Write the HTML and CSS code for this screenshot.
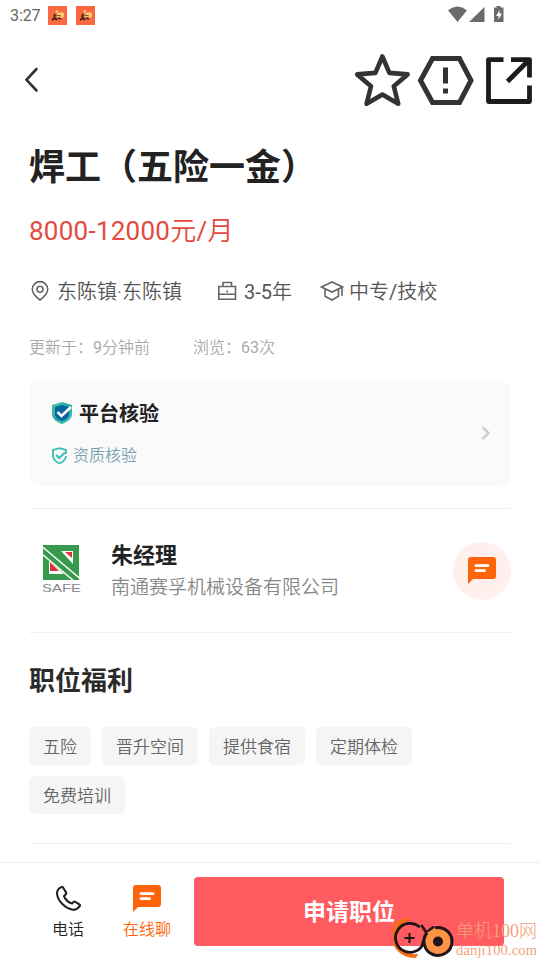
FILE: index.html
```html
<!DOCTYPE html>
<html lang="zh-CN">
<head>
<meta charset="utf-8">
<meta name="viewport" content="width=device-width, initial-scale=1">
<title>职位详情</title>
<link rel="stylesheet" href="styles.css">
</head>
<body>
<svg class="defs" aria-hidden="true">
  <symbol id="app" viewBox="0 0 19 19">
    <rect width="19" height="19" fill="#fa6840"/>
    <path d="M8 8l5-2 3 1v4l-4 1-3-1z" fill="#ffce73"/>
    <path d="M8 4.500l2 2" stroke="#ffce73" stroke-width="2"/>
    <path d="M4 14l3-2 2 2M7 8l-1 3M10 12l3 1" fill="none" stroke="#3b2218" stroke-width="1.800"/>
    <path d="M8 9l5 1" stroke="#8a3a18" stroke-width="1.200"/>
  </symbol>
  <symbol id="chat" viewBox="0 0 28 27">
    <path d="M3 0h22a3 3 0 0 1 3 3v16a3 3 0 0 1-3 3H5l-5 5V3a3 3 0 0 1 3-3z" fill="#ff6408"/>
    <path d="M8 8.700h12M8 13.700h8.500" stroke="#fff" stroke-width="2.800" stroke-linecap="round"/>
  </symbol>
</svg>

<div class="statusbar">
  <span class="clock">3:27</span>
  <svg class="app-icon" width="19" height="19"><use href="#app"/></svg>
  <svg class="app-icon" width="19" height="19"><use href="#app"/></svg>
  <svg class="signals" width="56" height="17" viewBox="0 0 56 17" fill="#6b6b6b">
    <path d="M0 4.200Q9.500-3.200 19 4.200L9.500 16z"/>
    <path d="M21 16L36.500 1v15z"/>
    <path d="M48.500 0h4v1.500h3V16H46V1.500h2.500z"/>
    <path d="M51.500 4l-3.500 6h2.500v3.500l3.500-6h-2.500z" fill="#fff"/>
  </svg>
</div>

<header class="topbar">
  <svg class="back" width="15" height="26" viewBox="0 0 15 26"><path d="M12.500 2L2.500 12.800l10 10.700" fill="none" stroke="#333" stroke-width="2.600" stroke-linecap="round"/></svg>
  <svg class="act-icon" width="178" height="56" viewBox="355 52 178 56" fill="none">
    <path d="M382.400 56.500l7 16.400 18.200 1.500-13.800 11.800 4.400 17.600-15.800-9.300-15.800 9.300 4.400-17.600-13.800-11.800 18.200-1.500z" stroke="#333" stroke-width="4.600" stroke-linejoin="round"/>
    <path d="M432.500 58.500h27l11.500 22-11.500 22h-27l-12-22z" stroke="#333" stroke-width="5"/>
    <path d="M445.500 67.500v16M445.500 88.500v5" stroke="#333" stroke-width="5"/>
    <path d="M503.500 59.700h-15v41.800h41V85.500M511 59.700h18.500V77.500M529 60L507.500 81.500" stroke="#1c1c1c" stroke-width="4.800" stroke-linejoin="round"/>
  </svg>
</header>

<main class="content">
  <h1 class="job-title">焊工（五险一金）</h1>
  <p class="salary"><span class="num">8000-12000</span>元<span class="num">/</span>月</p>
  <div class="meta">
    <span class="meta-item place"><svg width="22" height="22" viewBox="0 0 22 22"><path d="M11 20C7 17 3.300 13.500 3.300 9.300a7.700 7.700 0 0 1 15.400 0C18.700 13.500 15 17 11 20z"/><circle cx="11" cy="9.300" r="3"/></svg>东陈镇·东陈镇</span>
    <span class="meta-item years"><svg width="20" height="22" viewBox="0 0 20 22"><path d="M1.800 6.500h16.700v12.700H1.800zM6 6.500v-4h8.500v4M1.800 14.200h16.700M10.200 10.500v2"/></svg><span><span class="num">3-5</span>年</span></span>
    <span class="meta-item degree"><svg width="24" height="22" viewBox="0 0 24 22"><path d="M1.500 7L12 2l10.500 5L12 12zM5 9v7.200l7 3.800 6.500-3.800V9M22 8v8"/></svg><span>中专<span class="num">/</span>技校</span></span>
  </div>
  <div class="stats"><span>更新于：<span class="num">9</span>分钟前</span><span>浏览：<span class="num">63</span>次</span></div>

  <section class="verify">
    <div class="verify-text">
      <div class="verify-title">
        <svg width="22" height="24" viewBox="0 0 22 24">
          <defs><linearGradient id="teal" x1="0" y1="0" x2="1" y2="1"><stop offset="0" stop-color="#48c5b0"/><stop offset=".5" stop-color="#28a7a2"/><stop offset="1" stop-color="#42c9ad"/></linearGradient></defs>
          <path d="M11 1l10 3v9c0 5-5 8-10 10C6 21 1 18 1 13V4z" fill="url(#teal)"/>
          <path d="M11 4l7 2v7c0 4-4 6-7 7-3-1-7-3-7-7V6z" fill="#0864a0"/>
          <path d="M6.500 11l4 4L20 6" fill="none" stroke="#fff" stroke-width="2.600"/>
        </svg>平台核验
      </div>
      <div class="verify-sub">
        <svg width="17" height="18" viewBox="0 0 17 18" fill="none" stroke="#38bfb1" stroke-width="1.800"><path d="M15 7V3L8.500 1.200 2 3v6c0 4 3.500 6 6.500 7.500C11.500 15 15 13 15 9"/><path d="M5.200 8l3 3L14 5.500" stroke-width="2"/></svg>资质核验
      </div>
    </div>
    <svg width="10" height="16" viewBox="0 0 10 16"><path d="M1.500 2l6 6-6 6" fill="none" stroke="#ccc" stroke-width="2.400"/></svg>
  </section>

  <section class="recruiter">
    <svg class="avatar" width="64" height="64" viewBox="0 0 64 64">
      <circle cx="32" cy="32" r="31.500" fill="#fff" stroke="#fcfcfc"/>
      <path d="M14 6h36v35H14z" fill="#37994b"/>
      <path d="M32 12h12v13zM20 22v13h15z" fill="#fff"/>
      <path d="M36 13h7v6zM21 23v9h9z" fill="#df303d"/>
      <path d="M13 7.500l38 32M13 15l32 27" stroke="#fff" stroke-width="1.500"/>
      <text class="logo-text" x="13" y="53" textLength="39" lengthAdjust="spacingAndGlyphs">SAFE</text>
    </svg>
    <div class="recruiter-info"><h2>朱经理</h2><p>南通赛孚机械设备有限公司</p></div>
    <div class="chat-round"><svg width="28" height="27"><use href="#chat"/></svg></div>
  </section>

  <section class="benefits">
    <h2>职位福利</h2>
    <div class="tags"><span>五险</span><span>晋升空间</span><span>提供食宿</span><span>定期体检</span><span>免费培训</span></div>
  </section>
</main>

<footer class="bottombar">
  <div class="tab phone"><svg width="26" height="27" viewBox="0 0 26 27"><path d="M6.300 2.100C3.500 3.500 2 5.500 2 8.500 2.500 16 10.500 23.500 18 24.800c3 .4 5-1.300 6.700-3.600.5-.7.300-1.400-.4-1.900l-4-2.500c-.6-.4-1.300-.3-1.800.2L17 18.500C13.500 17.500 10.500 14.500 9 11.200l1.800-2c.5-.5.600-1.200.2-1.800L8 2.500c-.4-.6-1.100-.8-1.700-.4z" fill="none" stroke="#222" stroke-width="2.100" stroke-linejoin="round"/></svg>电话</div>
  <div class="tab online"><svg width="28" height="27"><use href="#chat"/></svg>在线聊</div>
  <div class="apply">申请职位</div>
</footer>

<div class="watermark">
  <svg width="64" height="44" viewBox="0 0 64 44">
    <path d="M20 3C6 0-1 12 2 22c2 0 4-2 5-5C9 10 13 6 20 3z" fill="#f76c13"/>
    <path d="M1 24c3 12 12 18 24 18l2-4C15 39 8 34 5 26z" fill="#f76c13"/>
    <path d="M28 10.500A14.500 14.500 0 1 0 31 30C33 23 35 15 42 11.500M31 10l4 6" fill="none" stroke="#20151a" stroke-width="2.800" stroke-linecap="round"/>
    <path d="M44 11.800a14 14 0 1 1-8 5" fill="#ff9345" stroke="#20151a" stroke-width="3"/>
    <circle cx="47" cy="25.500" r="5" fill="#20151a"/>
    <path d="M18.500 17v10M13.500 22h10" stroke="#20151a" stroke-width="2"/>
  </svg>
  <div class="watermark-text"><span class="wm-name">单机100网</span><span class="wm-url">danji100.com</span></div>
</div>
</body>
</html>
```

FILE: styles.css
```css
* { box-sizing: border-box; }
body {
  margin: 0;
  width: 540px;
  height: 960px;
  display: flex;
  flex-direction: column;
  overflow: hidden;
  position: relative;
  background: #fff;
  color: #222;
  font-family: Roboto, "Noto Sans CJK SC", sans-serif;
  font-weight: 350;
}
h1, h2, p { margin: 0; }
svg { display: block; flex: none; }
.defs { position: absolute; width: 0; height: 0; }
.num { font-weight: 400; }

.statusbar { height: 32px; display: flex; align-items: center; padding: 0 35px 0 10px; }
.clock { width: 38px; font-size: 16px; line-height: 20px; font-weight: 400; color: #666; letter-spacing: -.1px; }
.app-icon { margin: -1px 9px 0 0; }
.signals { margin: -3px 1px 0 auto; }

.topbar { height: 96px; display: flex; align-items: center; justify-content: space-between; padding: 0 7px 0 24px; }

.content { flex: none; height: 734px; padding: 0 29px; }
.job-title { margin-top: 14px; font-size: 36px; line-height: 52px; font-weight: 700; white-space: nowrap; }
.salary { margin-top: 17px; font-size: 26px; line-height: 40px; letter-spacing: .25px; color: #e44a3f; }
.meta { margin-top: 23px; height: 32px; display: flex; align-items: center; font-size: 20px; color: #555; }
.meta-item { display: flex; align-items: center; white-space: nowrap; }
.meta-item svg { fill: none; stroke: #666; stroke-width: 1.6; margin-top: 1px; }
.place { width: 188px; gap: 6px; }
.years { width: 103px; gap: 7px; }
.degree { gap: 5px; }
.stats { margin-top: 28px; height: 24px; display: flex; align-items: center; gap: 43px; font-size: 16px; color: #aaa; }

.verify { margin-top: 22px; height: 106px; border-radius: 10px; background: #fafafa; display: flex; align-items: center; justify-content: space-between; padding: 0 20px 0 22px; }
.verify-title { display: flex; align-items: center; gap: 6px; font-size: 20px; line-height: 30px; font-weight: 700; }
.verify-title svg { margin-top: -2px; }
.verify-sub { margin-top: 15px; display: flex; align-items: center; gap: 5px; font-size: 16px; line-height: 24px; color: #7b9fb2; }

.recruiter { margin-top: 22px; height: 125px; border: solid #f1f1f1; border-width: 1px 0; display: flex; align-items: center; }
.logo-text { font: 11px "Liberation Sans", sans-serif; fill: #888; }
.recruiter-info { margin: 1px 0 0 18px; flex: 1; }
.recruiter-info h2 { font-size: 22px; line-height: 33px; font-weight: 700; }
.recruiter-info p { font-size: 19px; line-height: 32px; color: #888; }
.chat-round { width: 58px; height: 58px; border-radius: 50%; background: #ffefed; display: flex; align-items: center; justify-content: center; }

.benefits { height: 211px; border-bottom: 1px solid #f1f1f1; padding-top: 28px; }
.benefits h2 { font-size: 26px; line-height: 40px; font-weight: 700; color: #2b2b2b; }
.tags { margin-top: 26px; display: flex; flex-wrap: wrap; gap: 11px; }
.tags span { height: 38px; padding: 1px 14px 0; border-radius: 5px; background: #f5f5f5; font-size: 17px; line-height: 38px; color: #666; }

.bottombar { height: 98px; border-top: 1px solid #eee; background: #fff; display: flex; align-items: flex-start; padding: 14px 36px 0 29px; }
.tab { display: flex; flex-direction: column; align-items: center; padding-top: 8px; font-size: 16px; line-height: 24px; gap: 6px; }
.phone { width: 78px; }
.online { width: 80px; color: #ff6408; }
.apply { margin-left: 7px; width: 310px; height: 69px; padding-top: 1px; border-radius: 4px; background: #ff5b61; color: #fff; font-size: 23px; font-weight: 700; line-height: 69px; text-align: center; }

.watermark { position: absolute; left: 391px; top: 916px; display: flex; }
.watermark-text { display: flex; flex-direction: column; margin-left: 1px; padding-top: 3px; color: #f5a17a; font-family: "Liberation Serif", "Noto Sans CJK SC", serif; white-space: nowrap; }
.wm-name { font-size: 18px; line-height: 25px; font-weight: 300; }
.wm-url { font-size: 14.5px; line-height: 12px; letter-spacing: .15px; }
```
